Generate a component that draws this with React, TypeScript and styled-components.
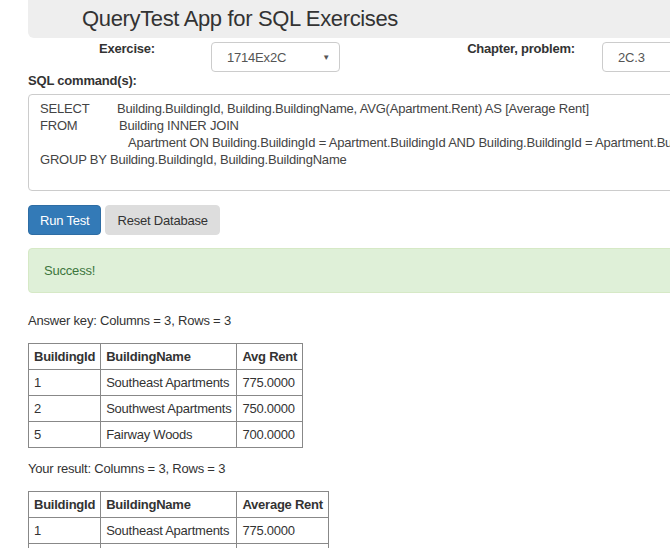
import React from "react";
import styled, { createGlobalStyle } from "styled-components";

const Global = createGlobalStyle`
  html, body { margin: 0; padding: 0; background: #fff; overflow: hidden; }
  body {
    font-family: "Liberation Sans", Arial, sans-serif;
    font-size: 13px;
    color: #333;
    letter-spacing: -0.2px;
  }
  * { box-sizing: border-box; }
`;

const Page = styled.div`
  width: 840px;
  padding-left: 28px;
`;

const Header = styled.header`
  height: 38px;
  background: #eee;
  border-radius: 0 0 0 6px;
  padding-left: 54px;
  display: flex;
  align-items: center;
`;

const Title = styled.h1`
  margin: 0;
  font-size: 22px;
  font-weight: 400;
  letter-spacing: -0.35px;
  color: #333;
  line-height: 26px;
`;

const FormRow = styled.div`
  display: flex;
  align-items: flex-start;
  margin-top: 2px;
  height: 32px;
`;

const FieldLabel = styled.label<{ $w: number; $gap: number }>`
  width: ${(p) => p.$w}px;
  margin-right: ${(p) => p.$gap}px;
  text-align: right;
  font-weight: 700;
  line-height: 17px;
`;

const Control = styled.div<{ $w: number }>`
  width: ${(p) => p.$w}px;
  height: 30px;
  margin-top: 2px;
  border: 1px solid #ccc;
  border-radius: 4px;
  background: #fff;
  color: #555;
  display: flex;
  align-items: center;
  justify-content: space-between;
  padding: 0 9px 0 15px;
  line-height: 17px;
`;

const Caret = styled.span`
  font-size: 8px;
  color: #555;
`;

const SectionLabel = styled.div`
  font-weight: 700;
  line-height: 17px;
`;

const SqlBox = styled.div`
  margin-top: 5px;
  height: 97px;
  border: 1px solid #ccc;
  border-radius: 4px;
  padding: 5px 11px;
  color: #444;
  line-height: 17px;
  white-space: nowrap;
  overflow: hidden;
`;

const SqlLine = styled.div``;

const Kw = styled.span<{ $w: number }>`
  display: inline-block;
  width: ${(p) => p.$w}px;
`;

const ButtonRow = styled.div`
  display: flex;
  gap: 4px;
  margin-top: 14px;
`;

const Button = styled.button<{ $primary?: boolean }>`
  height: 30px;
  padding: 0 11px;
  border-radius: 4px;
  font: inherit;
  letter-spacing: inherit;
  border: 1px solid ${(p) => (p.$primary ? "#2e6da4" : "#ddd")};
  background: ${(p) => (p.$primary ? "#337ab7" : "#ddd")};
  color: ${(p) => (p.$primary ? "#fff" : "#333")};
`;

const Alert = styled.div`
  margin-top: 13px;
  padding: 14px 15px;
  line-height: 15px;
  background: #dff0d8;
  border: 1px solid #d6e9c6;
  border-radius: 4px;
  color: #3c763d;
`;

const Caption = styled.p<{ $top: number }>`
  margin: ${(p) => p.$top}px 0 0;
  line-height: 17px;
`;

const Table = styled.table`
  margin-top: 14px;
  border-collapse: collapse;
  line-height: 19px;
  letter-spacing: -0.24px;
`;

const Th = styled.th`
  border: 1px solid #888;
  padding: 3px 5px;
  text-align: left;
  font-weight: 700;
`;

const Td = styled.td`
  border: 1px solid #888;
  padding: 3px 5px;
`;

type Row = [string, string, string];

const answerRows: Row[] = [
  ["1", "Southeast Apartments", "775.0000"],
  ["2", "Southwest Apartments", "750.0000"],
  ["5", "Fairway Woods", "700.0000"],
];

const resultRows: Row[] = [
  ["1", "Southeast Apartments", "775.0000"],
  ["2", "Southwest Apartments", "750.0000"],
  ["5", "Fairway Woods", "700.0000"],
];

function ResultTable({ headers, rows }: { headers: string[]; rows: Row[] }) {
  return (
    <Table>
      <thead>
        <tr>
          {headers.map((h) => (
            <Th key={h}>{h}</Th>
          ))}
        </tr>
      </thead>
      <tbody>
        {rows.map((r) => (
          <tr key={r[0]}>
            {r.map((c, i) => (
              <Td key={i}>{c}</Td>
            ))}
          </tr>
        ))}
      </tbody>
    </Table>
  );
}

export default function App() {
  return (
    <>
      <Global />
      <Page>
        <Header>
          <Title>QueryTest App for SQL Exercises</Title>
        </Header>
        <FormRow>
          <FieldLabel $w={127} $gap={56}>Exercise:</FieldLabel>
          <Control $w={129}>
            <span>1714Ex2C</span>
            <Caret>▼</Caret>
          </Control>
          <FieldLabel $w={235} $gap={27}>Chapter, problem:</FieldLabel>
          <Control $w={160}>
            <span>2C.3</span>
          </Control>
        </FormRow>
        <SectionLabel>SQL command(s):</SectionLabel>
        <SqlBox>
          <SqlLine>
            <Kw $w={77}>SELECT</Kw>
            Building.BuildingId, Building.BuildingName, AVG(Apartment.Rent) AS [Average Rent]
          </SqlLine>
          <SqlLine>
            <Kw $w={79}>FROM</Kw>
            Building INNER JOIN
          </SqlLine>
          <SqlLine>
            <Kw $w={88}></Kw>
            Apartment ON Building.BuildingId = Apartment.BuildingId AND Building.BuildingId = Apartment.BuildingId
          </SqlLine>
          <SqlLine>GROUP BY Building.BuildingId, Building.BuildingName</SqlLine>
        </SqlBox>
        <ButtonRow>
          <Button $primary>Run Test</Button>
          <Button>Reset Database</Button>
        </ButtonRow>
        <Alert>Success!</Alert>
        <Caption $top={19}>Answer key: Columns = 3, Rows = 3</Caption>
        <ResultTable headers={["BuildingId", "BuildingName", "Avg Rent"]} rows={answerRows} />
        <Caption $top={12}>Your result: Columns = 3, Rows = 3</Caption>
        <ResultTable headers={["BuildingId", "BuildingName", "Average Rent"]} rows={resultRows} />
      </Page>
    </>
  );
}
